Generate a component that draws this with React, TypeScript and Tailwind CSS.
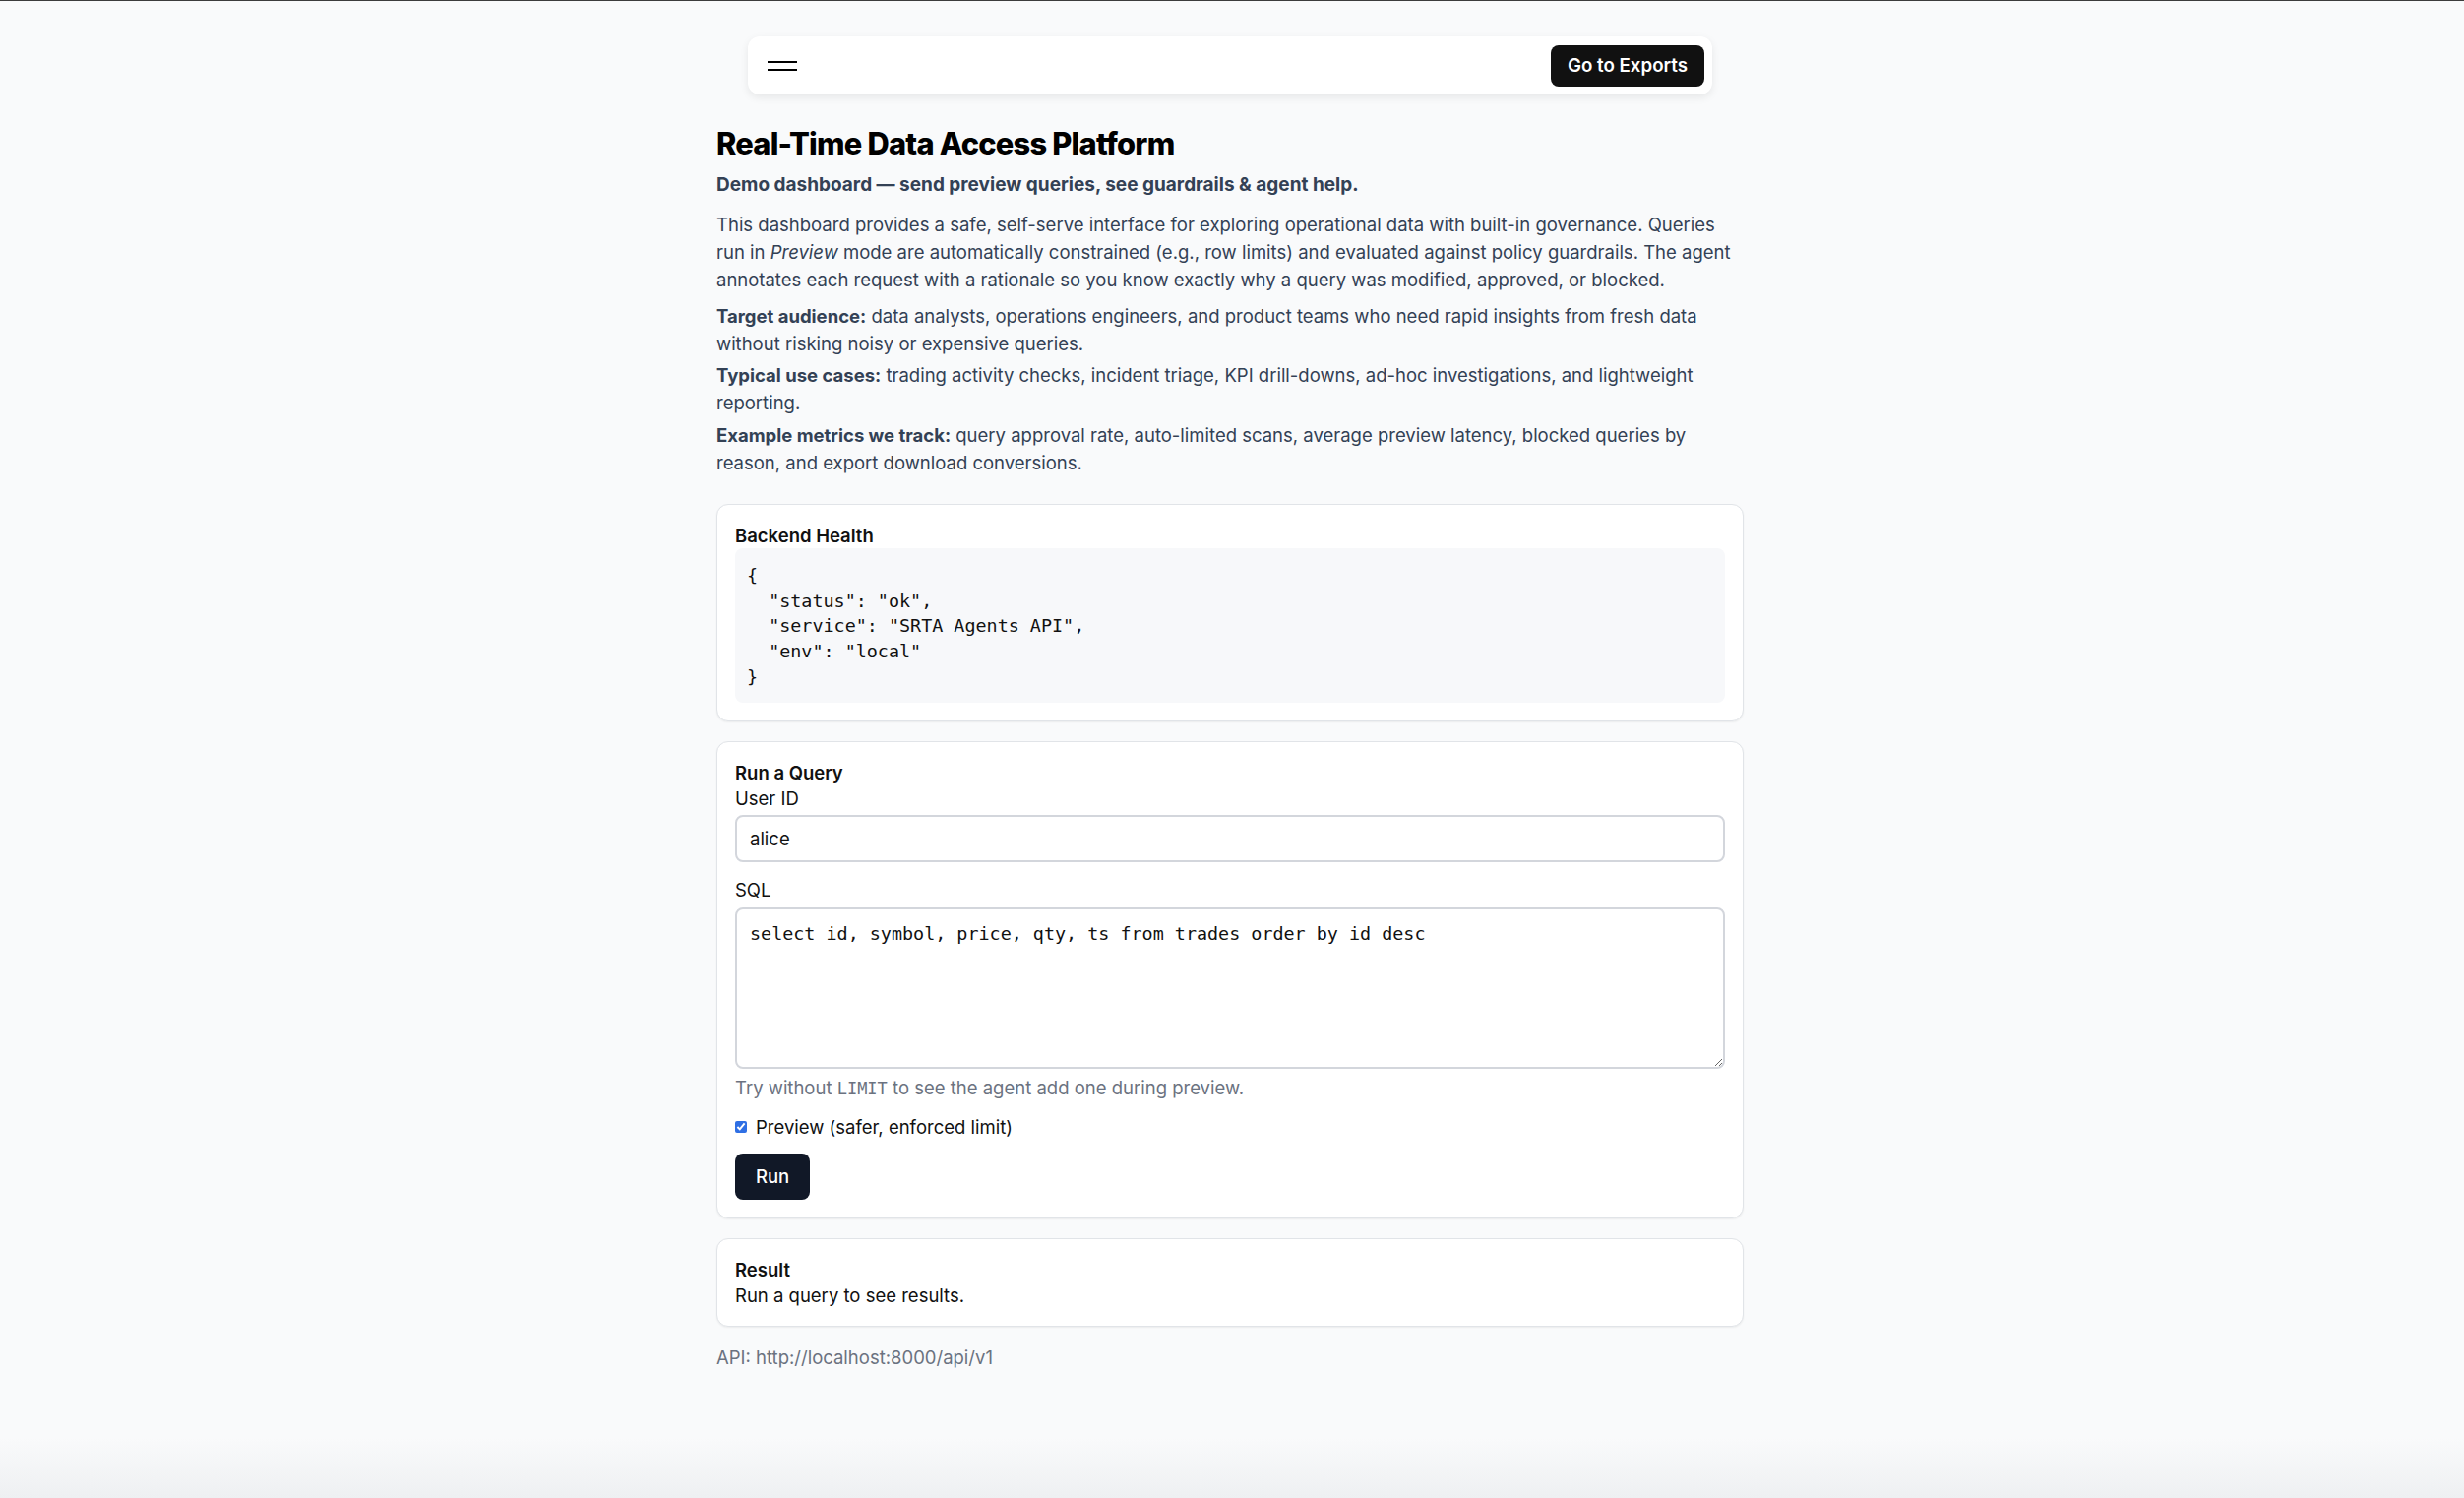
import React from 'react';

const healthJson = `{
  "status": "ok",
  "service": "SRTA Agents API",
  "env": "local"
}`;

function Card({ children }: { children: React.ReactNode }) {
  return (
    <section className="rounded-xl border border-[#e1e4e8] bg-white px-[18px] py-[18px] shadow-[0_1px_2px_rgba(0,0,0,0.06)]">
      {children}
    </section>
  );
}

export default function App() {
  return (
    <div className="min-h-[1522px] border-t border-[#3c3c3c] bg-[linear-gradient(to_bottom,#f9fafb_96%,#eef0f2)] pr-1 pt-[36px] font-['Inter',sans-serif] text-[18.5px] leading-[26px] text-[#111]">
      {/* Top bar */}
      <nav className="mx-auto flex h-[59px] w-[980px] items-center justify-between rounded-xl bg-white pl-5 pr-2 shadow-[0_3px_8px_rgba(0,0,0,0.08)]">
        <button className="flex h-[30px] w-[30px] flex-col justify-center gap-[6px]" aria-label="Menu">
          <span className="h-[2px] w-[30px] bg-black" />
          <span className="h-[2px] w-[30px] bg-black" />
        </button>
        <button className="h-[42px] rounded-lg bg-[#111111] px-[17px] text-[18.7px] font-semibold text-white">
          Go to Exports
        </button>
      </nav>

      <main className="mx-auto mt-[32px] w-[1044px]">
        <h1 className="text-[30.8px] font-extrabold leading-[36px] tracking-[-0.025em] text-black">
          Real-Time Data Access Platform
        </h1>
        <p className="mt-[11px] text-[19px] font-bold text-[#334155]">
          Demo dashboard — send preview queries, see guardrails &amp; agent help.
        </p>

        <div className="leading-[28px] text-[#334155]">
          <p className="mt-[13px]">
            This dashboard provides a safe, self-serve interface for exploring operational data with built-in
            governance. Queries run in <em>Preview</em> mode are automatically constrained (e.g., row limits) and
            evaluated against policy guardrails. The agent annotates each request with a rationale so you know
            exactly why a query was modified, approved, or blocked.
          </p>
          <p className="mt-[9px]">
            <strong>Target audience:</strong> data analysts, operations engineers, and product teams who need rapid
            insights from fresh data without risking noisy or expensive queries.
          </p>
          <p className="mt-[4px]">
            <strong>Typical use cases:</strong> trading activity checks, incident triage, KPI drill-downs, ad-hoc
            investigations, and lightweight reporting.
          </p>
          <p className="mt-[5px]">
            <strong>Example metrics we track:</strong> query approval rate, auto-limited scans, average preview
            latency, blocked queries by reason, and export download conversions.
          </p>
        </div>

        <div className="mt-[28px] flex flex-col gap-[20px]">
          <Card>
            <h2 className="font-semibold">Backend Health</h2>
            <pre className="rounded-lg bg-[#f7f8fa] px-[12px] pb-[13px] pt-[15px] font-['DejaVu_Sans_Mono',monospace] text-[18.4px] leading-[25.7px] text-[#111]">
              {healthJson}
            </pre>
          </Card>

          <Card>
            <h2 className="font-semibold">Run a Query</h2>
            <label className="block">User ID</label>
            <input
              className="mt-[4px] block h-[48px] w-full rounded-lg border-2 border-[#d3d6dc] bg-white px-[13px] text-[18.5px] text-[#111] outline-none"
              defaultValue="alice"
            />
            <label className="mt-[15px] block">SQL</label>
            <textarea
              className="mt-[5px] block h-[164px] w-full rounded-lg border-2 border-[#d3d6dc] bg-white px-[13px] py-[12px] font-['DejaVu_Sans_Mono',monospace] text-[18.4px] leading-[25.7px] text-[#111] outline-none"
              defaultValue="select id, symbol, price, qty, ts from trades order by id desc"
            />
            <p className="mt-[6px] text-[#6b7280]">
              Try without <code className="font-['DejaVu_Sans_Mono',monospace] text-[17px]">LIMIT</code> to see the
              agent add one during preview.
            </p>
            <label className="mt-[13px] flex items-center gap-[9px]">
              <input type="checkbox" defaultChecked className="h-[12px] w-[12px] accent-[#2f6fe4]" />
              <span>Preview (safer, enforced limit)</span>
            </label>
            <button className="mt-[14px] h-[47px] rounded-lg bg-[#111827] px-[21px] text-[18.5px] font-medium text-white">
              Run
            </button>
          </Card>

          <Card>
            <h2 className="font-semibold">Result</h2>
            <p>Run a query to see results.</p>
          </Card>
        </div>

        <p className="mt-[18px] text-[#6b7280]">API: http://localhost:8000/api/v1</p>
      </main>
    </div>
  );
}
